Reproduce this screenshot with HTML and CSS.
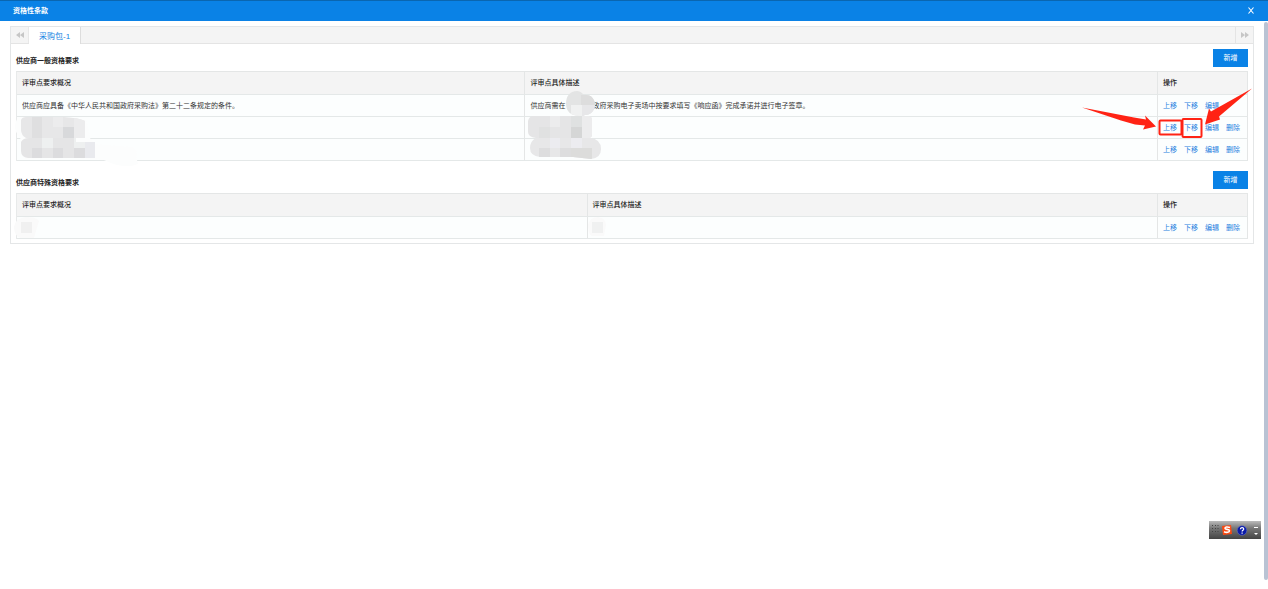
FILE: index.html
```html
<!DOCTYPE html>
<html lang="zh-CN">
<head>
<meta charset="utf-8">
<title>资格性条款</title>
<link rel="stylesheet" href="styles.css">
</head>
<body>
<header class="titlebar">
  <h1 class="title">资格性条款</h1>
  <button class="close" type="button" aria-label="关闭"><svg width="6" height="8" viewBox="0 0 6 8"><path d="M.5 .5l5 6M5.500 .5l-5 6" stroke="#fff" stroke-width="1.100" fill="none"/></svg></button>
</header>
<div class="body">
  <main class="content">
    <div class="panel">
      <nav class="tabs">
        <button class="scroll prev" type="button" aria-label="向左"><svg width="8" height="6" viewBox="0 0 8 6"><path d="M4 0v6L0 3zM8 0v6L4 3z" fill="#c6c6c6"/></svg></button>
        <button class="tab" type="button">采购包-1</button>
        <button class="scroll next" type="button" aria-label="向右"><svg width="8" height="6" viewBox="0 0 8 6"><path d="M0 0v6l4-3zM4 0v6l4-3z" fill="#c6c6c6"/></svg></button>
      </nav>
      <section class="section">
        <div class="head"><h2 class="heading">供应商一般资格要求</h2><button class="add" type="button">新增</button></div>
        <table class="grid">
          <colgroup><col class="general-name"><col><col class="ops"></colgroup>
          <thead><tr><th>评审点要求概况</th><th>评审点具体描述</th><th>操作</th></tr></thead>
          <tbody>
            <tr>
              <td>供应商应具备《中华人民共和国政府采购法》第二十二条规定的条件。</td>
              <td>供应商需在<span class="blank"></span>政府采购电子卖场中按要求填写《响应函》完成承诺并进行电子签章。
                <svg class="overlay mask-detail" width="84" height="74" viewBox="522 88 84 74">
                  <defs>
                    <clipPath id="m1"><path d="M566 104c0-8 4-13 11-13 5 0 5 4 9 4 6 0 9 5 9 10s-4 10-10 10c-3 2-7 1-11 0-5-1-8-6-8-11z"/></clipPath>
                    <clipPath id="m2"><path d="M528 121q1-5 6-5h54q4 0 4 4v15q0 3-4 3h-52q-8-1-8-6z"/></clipPath>
                    <clipPath id="m3"><path d="M530 148q0-7 6-10h54q11 1 11 11 0 9-10 10l-18-2h-33q-10-1-10-9z"/></clipPath>
                  </defs>
                  <g clip-path="url(#m1)"><path fill="#e3e4e4" d="M560 88h40v30h-40z"/><path fill="#ddd" d="M581 95h15v10h-15z"/><path fill="#f0f1f1" d="M571 105h11v11h-11z"/><path fill="#e7e7e9" d="M582 105h14v11h-14z"/></g>
                  <g clip-path="url(#m2)"><path fill="#e5e5e6" d="M526 115h67v24h-67z"/><path fill="#ececed" d="M550 115h10v12h-10zM582 115h11v24h-11z"/><path fill="#dfe1e1" d="M571 115h11v12h-11z"/><path fill="#d5d6d6" d="M571 127h11v11h-11z"/><path fill="#e0e1e1" d="M539 127h11v11h-11z"/></g>
                  <g clip-path="url(#m3)"><path fill="#e7e7e8" d="M528 137h74v24h-74z"/><path fill="#ddddde" d="M539 148h11v12h-11zM560 148h11v12h-11z"/><path fill="#ececf0" d="M550 137h10v11h-10zM571 137h11v11h-11z"/><path fill="#dcdcdb" d="M571 148h21v12h-21z"/></g>
                </svg>
              </td>
              <td><span class="links"><a href="#">上移</a><a href="#">下移</a><a href="#">编辑</a></span>
                <svg class="overlay marks" width="176" height="58" viewBox="1078 84 176 58">
                  <g fill="#ff2314"><path d="M1082 107.500l52 10 12 2-1-4 11 11-13 3 2-4-10-1-14-4z"/><path d="M1252 88.500l-33 28 1 3-15 5 4-16 2 3z"/></g>
                  <g fill="none" stroke="#ff2314" stroke-width="2"><rect x="1159.500" y="120.500" width="22" height="14" rx="1"/><rect x="1182.500" y="119" width="19" height="18" rx="1"/></g>
                </svg>
              </td>
            </tr>
            <tr>
              <td>
                <svg class="overlay mask-name" width="125" height="55" viewBox="14 115 125 55">
                  <defs>
                    <clipPath id="n1"><path d="M21 120q1-3 5-3h38q16 1 21 4v17H26q-5-3-5-8z"/></clipPath>
                    <clipPath id="n2"><path d="M21 142q2-4 8-4h47v4h19v16H28q-7-1-7-7z"/></clipPath>
                  </defs>
                  <path fill="#fcfdfd" d="M15 126q1-9 6-9l65 3 4 18 4 6 38 3q6 5 4 9l2 8q-14 6-34-4l-27-2-52 1-5-22q-5-4-5-11z"/>
                  <g clip-path="url(#n1)"><path fill="#e7e7e8" d="M20 116h66v23H20z"/><path fill="#dfdfe0" d="M32 116h10v11H32zM32 127h10v11H32z"/><path fill="#ececed" d="M53 116h10v11H53zM74 116h11v22H74z"/><path fill="#d8d9db" d="M63 127h11v11H63z"/></g>
                  <g clip-path="url(#n2)"><path fill="#e5e5e6" d="M20 137h76v22H20z"/><path fill="#eef0f0" d="M42 137h11v11H42zM74 137h11v11H74z"/><path fill="#dcdcde" d="M32 148h10v11H32zM53 148h10v11H53zM74 148h11v11H74z"/><path fill="#e9eaee" d="M85 142h11v17H85z"/></g>
                </svg>
              </td>
              <td></td>
              <td><span class="links"><a href="#">上移</a><a href="#">下移</a><a href="#">编辑</a><a href="#">删除</a></span></td>
            </tr>
            <tr><td></td><td></td><td><span class="links"><a href="#">上移</a><a href="#">下移</a><a href="#">编辑</a><a href="#">删除</a></span></td></tr>
          </tbody>
        </table>
      </section>
      <section class="section">
        <div class="head"><h2 class="heading">供应商特殊资格要求</h2><button class="add" type="button">新增</button></div>
        <table class="grid">
          <colgroup><col><col><col class="ops"></colgroup>
          <thead><tr><th>评审点要求概况</th><th>评审点具体描述</th><th>操作</th></tr></thead>
          <tbody>
            <tr>
              <td><svg class="overlay mask-small" width="26" height="22" viewBox="0 0 26 22"><path fill="#fafafa" d="M0 10Q1 1 12 0q11 0 13 4l-3 10-2 7H6Q0 18 0 10z"/><path fill="#f0f0f0" d="M7 5h11v11H7z"/></svg></td>
              <td><svg class="overlay mask-small" width="26" height="22" viewBox="0 0 26 22"><path fill="#fafafa" d="M3 8Q5 0 13 0q8 1 8 8l-2 11H7Q3 18 3 8z"/><path fill="#f0f1f1" d="M7 5h11v11H7z"/></svg></td>
              <td><span class="links"><a href="#">上移</a><a href="#">下移</a><a href="#">编辑</a><a href="#">删除</a></span></td>
            </tr>
          </tbody>
        </table>
      </section>
    </div>
  </main>
  <div class="scrollbar"></div>
</div>
<div class="ime">
  <svg width="52" height="18" viewBox="0 0 52 18">
    <path d="M3.500 4v9M6.500 4v9M9 4v9" stroke="#444" stroke-dasharray="1 2" fill="none"/>
    <path fill="#fb4a12" d="M13 5l9-1 1 9-9 1z"/>
    <path d="M21 6.500c-3-1-5-.5-5 .8 0 1.500 4.500.7 4.500 2.500 0 1.600-3 2-5.500.9" stroke="#fff" stroke-width="1.600" fill="none"/>
    <circle cx="33" cy="9.500" r="4.800" fill="#0b1ba8" stroke="#6c78c8" stroke-width=".5"/>
    <path d="M31.500 8.200c0-2.200 3.300-2 3.200 0-.1 1-1.600 1.200-1.600 2.300M33.100 11.500v1.200" stroke="#fff" stroke-width="1.200" fill="none"/>
    <path d="M45 6.500h4" stroke="#fff"/><path d="M45 12h4l-2 2z" fill="#fff"/>
  </svg>
</div>
</body>
</html>
```
FILE: styles.css
```css
* { box-sizing: border-box; }
body {
  margin: 0;
  min-height: 100vh;
  display: flex;
  flex-direction: column;
  background: #fff;
  color: #333;
  font: 7px/10px "Liberation Sans", "Noto Sans CJK SC", sans-serif;
}
button {
  margin: 0;
  padding: 0;
  border: 0;
  background: none;
  font: inherit;
  color: inherit;
  display: flex;
  align-items: center;
  justify-content: center;
}
h1, h2 { margin: 0; font-size: 7px; font-weight: 700; }
.titlebar {
  display: flex;
  align-items: center;
  justify-content: space-between;
  height: 21px;
  padding: 0 14px 0 13px;
  border-top: 1px solid #0a66b0;
  background: #0a82e6;
  color: #fff;
}
.body { flex: 1; display: flex; }
.content { flex: 1; min-width: 0; padding: 5px 10px; }
.scrollbar { width: 4px; margin: 1px 0 9px; border-radius: 2px; background: #b9c3d4; }
.panel { border: 1px solid #e4e6e7; padding-bottom: 4px; }
.tabs {
  display: flex;
  height: 17px;
  background: #f4f4f4;
  border-bottom: 1px solid #e4e4e4;
}
.scroll { width: 18px; }
.prev { border-right: 1px solid #e8e8e8; }
.next { margin-left: auto; border-left: 1px solid #e4e4e4; }
.tab {
  height: 17px;
  padding: 2px 10px 0;
  background: #fff;
  border-right: 1px solid #ddd;
  color: #1583e2;
  font-size: 8px;
}
.section { padding: 5px 5px 0; }
.head { display: flex; align-items: flex-start; justify-content: space-between; height: 22px; }
.section + .section .head { margin-top: 5px; }
.heading { padding-top: 7px; color: #222; }
.add { width: 35px; height: 18px; background: #0a82e6; color: #fff; }
.grid {
  width: 100%;
  table-layout: fixed;
  border-collapse: separate;
  border-spacing: 0;
  border-top: 1px solid #e4e6e6;
  border-left: 1px solid #e8eaea;
}
.general-name { width: 41.3%; }
.ops { width: 90px; }
th, td {
  position: relative;
  height: 22px;
  padding: 0 5px;
  border-right: 1px solid #e4e6e6;
  border-bottom: 1px solid #e4e8e8;
  background: #fcfefe;
  text-align: left;
  white-space: nowrap;
}
th { height: 23px; background: #f4f4f4; font-weight: 500; color: #222; }
.links { display: flex; gap: 7px; }
.links a { color: #1f80df; text-decoration: none; }
.blank { display: inline-block; width: 27px; }
.overlay { position: absolute; z-index: 1; pointer-events: none; }
.mask-detail { left: -3px; top: -7px; }
.marks { left: -80px; top: -11px; z-index: 2; }
.mask-name { left: -3px; top: -2px; }
.mask-small { left: -3px; top: 0; }
.ime {
  position: fixed;
  right: 7px;
  bottom: 50px;
  height: 18px;
  background: linear-gradient(#bbb, #777 40%, #444);
}
.ime svg { display: block; }
```
